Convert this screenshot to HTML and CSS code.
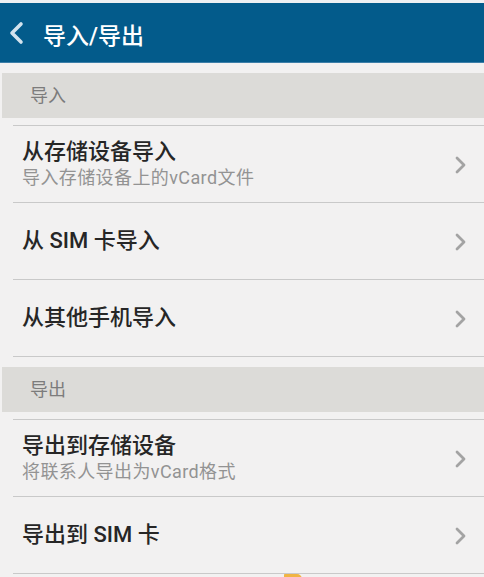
FILE: index.html
```html
<!DOCTYPE html>
<html lang="zh-CN">
<head>
    <meta charset="UTF-8">
    <meta name="viewport" content="width=device-width, initial-scale=1.0">
    <title>导入/导出</title>
    <link rel="stylesheet" href="styles.css">
</head>
<body>
    <div class="title-bar">
        <svg class="back" width="20" height="24" viewBox="0 0 20 24">
            <path d="M14 3 L5 12 L14 21" fill="none" stroke="#d3e3ee" stroke-width="3.6" stroke-linecap="round" stroke-linejoin="round"/>
        </svg>
        <h1>导入/导出</h1>
    </div>

    <div class="section-head">导入</div>
    <ul class="list">
        <li class="item">
            <div class="item-text">
                <div class="item-title">从存储设备导入</div>
                <div class="item-sub">导入存储设备上的vCard文件</div>
            </div>
            <svg class="chev" width="14" height="20" viewBox="0 0 14 20"><path d="M3 3 L10 10 L3 17" fill="none" stroke="#a3a3a3" stroke-width="2.8" stroke-linecap="round" stroke-linejoin="round"/></svg>
        </li>
        <li class="item">
            <div class="item-text">
                <div class="item-title">从 SIM 卡导入</div>
            </div>
            <svg class="chev" width="14" height="20" viewBox="0 0 14 20"><path d="M3 3 L10 10 L3 17" fill="none" stroke="#a3a3a3" stroke-width="2.8" stroke-linecap="round" stroke-linejoin="round"/></svg>
        </li>
        <li class="item">
            <div class="item-text">
                <div class="item-title">从其他手机导入</div>
            </div>
            <svg class="chev" width="14" height="20" viewBox="0 0 14 20"><path d="M3 3 L10 10 L3 17" fill="none" stroke="#a3a3a3" stroke-width="2.8" stroke-linecap="round" stroke-linejoin="round"/></svg>
        </li>
    </ul>

    <div class="section-head">导出</div>
    <ul class="list">
        <li class="item">
            <div class="item-text">
                <div class="item-title">导出到存储设备</div>
                <div class="item-sub">将联系人导出为vCard格式</div>
            </div>
            <svg class="chev" width="14" height="20" viewBox="0 0 14 20"><path d="M3 3 L10 10 L3 17" fill="none" stroke="#a3a3a3" stroke-width="2.8" stroke-linecap="round" stroke-linejoin="round"/></svg>
        </li>
        <li class="item">
            <div class="item-text">
                <div class="item-title">导出到 SIM 卡</div>
            </div>
            <svg class="chev" width="14" height="20" viewBox="0 0 14 20"><path d="M3 3 L10 10 L3 17" fill="none" stroke="#a3a3a3" stroke-width="2.8" stroke-linecap="round" stroke-linejoin="round"/></svg>
        </li>
    </ul>

    <span class="handle"></span>
</body>
</html>
```

FILE: styles.css
```css
body {
    margin: 0;
    background: #f2f1f1;
    font-family: Roboto, "Noto Sans CJK SC", sans-serif;
    position: relative;
    height: 577px;
    overflow: hidden;
}
.title-bar {
    display: flex;
    align-items: center;
    height: 59px;
    border-top: 3px solid #eef0f3;
    border-bottom: 1px solid #3c7ea8;
    background: #035b8b;
    padding-left: 7px;
}
.title-bar h1 {
    margin: 0 0 0 16px;
    font-size: 23px;
    font-weight: 500;
    color: #ffffff;
    padding-top: 3px;
}
.section-head {
    margin: 10px 0 7px 2px;
    height: 45px;
    line-height: 45px;
    background: #dcdbd8;
    color: #7c7c7c;
    font-size: 18px;
    padding-left: 28px;
}
.list {
    list-style: none;
    margin: 0;
    padding: 0 0 0 13px;
}
.item {
    display: flex;
    align-items: center;
    height: 76px;
    border-top: 1px solid #c9c9c9;
    padding-right: 16px;
}
.list .item:last-child {
    border-bottom: 1px solid #c9c9c9;
}
.item-text {
    flex: 1;
    padding-left: 9px;
}
.item-title {
    font-size: 22px;
    font-weight: 500;
    color: #262626;
    line-height: 28px;
}
.item-sub {
    font-size: 18px;
    letter-spacing: 0.4px;
    color: #939393;
    line-height: 24px;
}
.chev {
    margin-top: 2px;
}
.handle {
    position: absolute;
    left: 284px;
    top: 574px;
    width: 18px;
    height: 5px;
    background: #f0b444;
    border-radius: 2px 12px 0 0;
}
```
